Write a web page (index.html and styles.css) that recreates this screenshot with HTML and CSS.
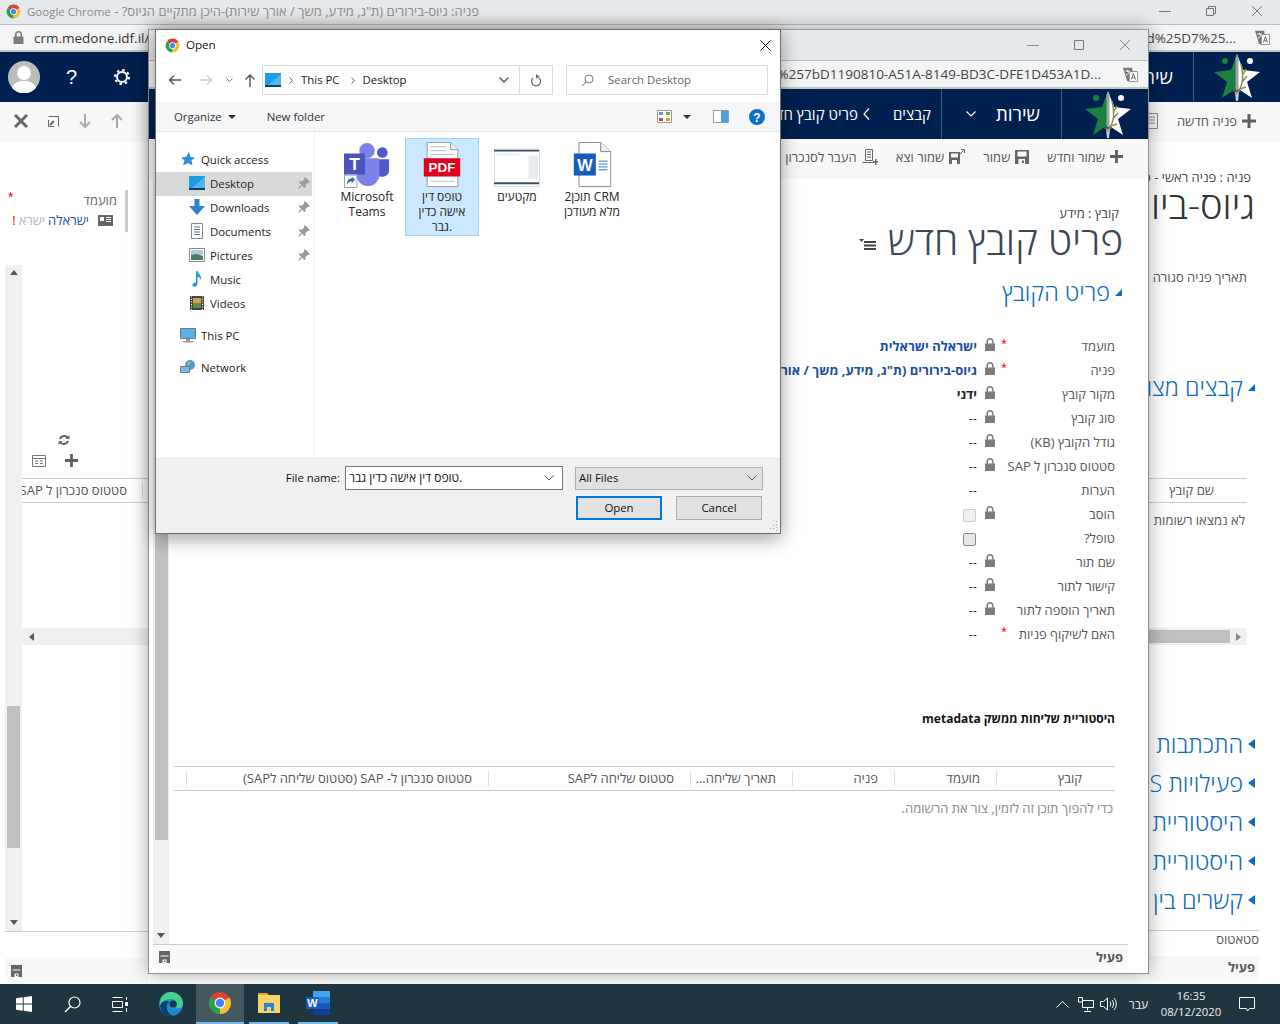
FILE: index.html
```html
<!DOCTYPE html>
<html>
<head>
<meta http-equiv="Content-Type" content="text/html; charset=utf-8">
<title>Open</title>
<link rel="stylesheet" href="styles.css">
</head>

<body>

<svg class="defs" width="0" height="0">
  <symbol id="i-chrome" viewBox="0 0 24 24">
    <path fill="#db4437" d="M12 12 2.47 6.5A11 11 0 0 1 21.53 6.5Z"/>
    <path fill="#fbc02d" d="M12 12 21.53 6.5A11 11 0 0 1 12 23Z"/>
    <path fill="#2e9e4f" d="M12 12 12 23A11 11 0 0 1 2.47 6.5Z"/>
    <circle cx="12" cy="12" r="5.4" fill="#fff"/><circle cx="12" cy="12" r="4.2" fill="#4285f4"/>
  </symbol>
  <symbol id="i-logo" viewBox="0 0 48 50">
    <path fill="#1b7f3e" d="M24 2 18 18 1 20 14 30 9 46 24 36Z"/>
    <path fill="#fff" d="M24 2 30 18 47 20 34 30 39 46 24 36Z"/>
    <circle cx="12" cy="9" r="3" fill="#1b7f3e"/><circle cx="37" cy="9" r="3" fill="#fff"/>
    <path fill="#9aa3a8" d="M22.5 6 24 2 25.500 6V38H22.500Z"/>
    <path fill="#555" d="M20 38H28V40H20Z"/><path fill="#c9ced1" d="M22 40H26L25 49H23Z"/>
    <path fill="none" stroke="#8d8f4d" stroke-width="1.500" d="M23 42C31 34 31 24 28 12M29 30 34 24M30 22 33 17M27 37 33 35"/>
  </symbol>
  <symbol id="i-lock" viewBox="0 0 10 13">
    <path fill="#7c7c7c" d="M0 5.500H1.500V3.500a3.500 3.500 0 0 1 7 0V5.500H10V13H0ZM3 5.500H7V3.500a2 2 0 0 0-4 0Z"/>
  </symbol>
  <symbol id="i-plus" viewBox="0 0 14 14"><path fill="#5f5f5f" d="M5.500 0H8.500V5.500H14V8.500H8.500V14H5.500V8.500H0V5.500H5.500Z"/></symbol>
  <symbol id="i-save" viewBox="0 0 14 14">
    <path fill="#666" fill-rule="evenodd" d="M0 0H14V14H0ZM2.500 1.500V6.500H11.500V1.500ZM3.500 9V14H10V9Z"/>
    <path fill="#666" d="M7 10.500H9V13H7Z"/>
  </symbol>
  <symbol id="i-disk" viewBox="0 0 11 12">
    <path fill="#666" fill-rule="evenodd" d="M0 0H11V12H0ZM1.500 4.500V5.500H9.500V4.500ZM3.500 8.500V12H7.500V8.500Z"/>
    <path fill="#666" d="M5 9.500H6.500V11H5Z"/>
  </symbol>
  <symbol id="i-pin" viewBox="0 0 12 12"><path fill="#9a9a9a" d="M7 0 12 5 10.800 6 10 5.500 7.500 8 7.500 10.500 6.500 11 1 5.500 1.500 4.500 4 4.500 6.500 2 6 1.200ZM3 8 4 9 .8 11.800 0 11Z"/></symbol>
  <symbol id="i-translate" viewBox="0 0 18 18">
    <path fill="#777" d="M0 1H11L13 17H5Z"/><path fill="#fff" stroke="#777" d="M7.500 5.500H17.500V17.500H7.500Z"/>
    <path fill="none" stroke="#fff" stroke-width="1.200" d="M3 5H8M5.500 3.500V5M3.500 10C6 9 7 7 7.500 5"/>
    <path fill="none" stroke="#666" stroke-width="1.200" d="M10 15 12.500 8 15 15M11 13H14"/>
  </symbol>
  <symbol id="i-desktop" viewBox="0 0 16 14"><path fill="#1b9de2" d="M0 0H16V13H0Z"/><path fill="#fff" opacity=".25" d="M16 1 3 12H16Z"/><path fill="#0c3f73" d="M0 12H16V14H0Z"/></symbol>
</svg>

<!-- window behind -->
<section class="win win--back">
  <div class="titlebar titlebar--short">
    <svg class="titlebar__ico"><use href="#i-chrome"/></svg>
    <p class="titlebar__text" dir="rtl">פניה: גיוס-בירורים (ת"ג, מידע, משך / אורך שירות)-היכן מתקיים הגיוס? - <span class="titlebar__app">Google Chrome</span></p>
    <div class="winctl">
      <svg width="12" height="12"><path stroke="#777" d="M0 6.500H12"/></svg>
      <svg width="12" height="12"><path fill="none" stroke="#777" d="M1.500 3.500H8.500V10.500H1.500ZM3.500 3.500V1.500H10.500V8.500H8.500"/></svg>
      <svg width="12" height="12"><path stroke="#777" d="M1 1 11 11M11 1 1 11"/></svg>
    </div>
  </div>
  <div class="urlbar urlbar--back">
    <svg class="urlbar__lock"><use href="#i-lock"/></svg>
    <span class="urlbar__text">crm.medone.idf.il/</span>
    <span class="urlbar__tail">d%25D7%25...</span>
    <svg class="urlbar__tr"><use href="#i-translate"/></svg>
  </div>
  <div class="topnav topnav--back">
    <div class="topnav__user">
      <svg class="avatar" viewBox="0 0 32 32"><circle cx="16" cy="16" r="16" fill="#bdbdbd"/><circle cx="16" cy="12" r="7" fill="#fff"/><path fill="#fff" d="M4 27C6 21 11 20 16 20S26 21 28 27A16 16 0 0 1 4 27Z"/></svg>
      <span class="topnav__help">?</span>
      <svg class="topnav__gear" viewBox="0 0 16 16"><circle cx="8" cy="8" r="5" fill="none" stroke="#fff" stroke-width="2"/><circle cx="8" cy="8" r="7" fill="none" stroke="#fff" stroke-width="2" stroke-dasharray="2.500 3"/></svg>
    </div>
    <div class="topnav__brand">
      <span class="topnav__svc">שירות</span>
      <span class="topnav__logo"><svg width="48" height="50"><use href="#i-logo"/></svg></span>
    </div>
  </div>
  <div class="cmdbar cmdbar--back">
    <div class="cmdbar__left">
      <svg width="14" height="14"><path stroke="#666" stroke-width="3" d="M1 1 13 13M13 1 1 13"/></svg>
      <svg width="14" height="14"><path fill="none" stroke="#666" d="M2.500 2.500H12.500V12.500M2.500 6V12.500H8"/><path stroke="#666" stroke-width="2" d="M4 11 8 7"/></svg>
      <svg width="14" height="14"><path fill="none" stroke="#aaa" stroke-width="2" d="M7 0V13M2 8 7 13 12 8"/></svg>
      <svg width="14" height="14"><path fill="none" stroke="#aaa" stroke-width="2" d="M7 14V1M2 6 7 1 12 6"/></svg>
    </div>
    <div class="cmd cmd--back">
      <svg width="14" height="14"><use href="#i-plus"/></svg><span>פניה חדשה</span>
      <svg class="cmd__doc" width="14" height="16"><path fill="none" stroke="#888" d="M1.500 .5H12.500V15.500H1.500ZM4 4H10M4 7H10M4 10H10"/></svg>
    </div>
  </div>
  <div class="back__body">
    <div class="back__left">
      <div class="lookup">
        <div class="lookup__head"><b class="req">*</b><span>מועמד</span></div>
        <div class="lookup__val" dir="rtl"><svg width="15" height="11" viewBox="0 0 15 11"><path fill="#666" d="M0 0H15V11H0Z"/><path fill="#fff" d="M2 2H6V6H2ZM8 2H13V3H8ZM8 4H13V5H8ZM8 6H13V7H8Z"/></svg><span class="lookup__link">ישראלה</span><span class="lookup__fade">ישרא</span><b class="lookup__mark">!</b></div>
      </div>
      <div class="pane">
        <div class="vscroll">
          <span class="vscroll__up"></span>
          <span class="vscroll__gap vscroll__gap--a"></span>
          <span class="vscroll__thumb"></span>
          <span class="vscroll__gap"></span>
          <span class="vscroll__down"></span>
        </div>
        <div class="pane__main">
          <div class="pane__tools">
            <svg class="pane__sync" width="12" height="12" viewBox="0 0 12 12"><path fill="none" stroke="#666" stroke-width="2" d="M10 4A4.500 4.500 0 0 0 2 5M2 8A4.500 4.500 0 0 0 10 7"/><path fill="#666" d="M11.500 1V5H7.500ZM.5 11V7H4.500Z"/></svg>
            <div class="pane__toolrow">
              <svg width="14" height="12" viewBox="0 0 14 12"><path fill="none" stroke="#777" d="M.5 .5H13.500V11.500H.5ZM.5 3.500H13.500M3 6H6M8 6H11M3 8.500H6M8 8.500H11"/></svg>
              <svg width="13" height="13"><use href="#i-plus"/></svg>
            </div>
          </div>
          <div class="pane__head" dir="rtl"><span>סטטוס סנכרון ל SAP</span></div>
          <div class="hscroll"><span class="hscroll__left"></span></div>
        </div>
      </div>
      <div class="back__status"><svg width="11" height="12"><use href="#i-disk"/></svg></div>
    </div>
    <div class="back__right" dir="rtl">
      <p class="crumb">פניה : פניה ראשי - ס</p>
      <h2 class="bighead">גיוס-ביו</h2>
      <p class="closedate">תאריך פניה סגורה</p>
      <h3 class="sect sect--files">קבצים מצו</h3>
      <div class="filetable">
        <div class="filetable__head">שם קובץ</div>
        <p class="filetable__none">לא נמצאו רשומות</p>
      </div>
      <div class="hscroll hscroll--right"><span class="hscroll__right"></span><span class="hscroll__thumb"></span></div>
      <div class="sections">
        <h3 class="sect">התכתבות</h3>
        <h3 class="sect">פעילויות S</h3>
        <h3 class="sect">היסטוריית</h3>
        <h3 class="sect">היסטוריית</h3>
        <h3 class="sect">קשרים בין</h3>
      </div>
      <p class="statuslabel">סטאטוס</p>
      <div class="back__rstatus">פעיל</div>
    </div>
  </div>
</section>

<!-- middle window -->
<section class="win win--mid">
  <div class="titlebar titlebar--mid">
    <div class="winctl winctl--mid">
      <svg width="12" height="12"><path stroke="#888" d="M0 6.500H12"/></svg>
      <svg width="12" height="12"><path fill="none" stroke="#777" d="M1.500 1.500H10.500V10.500H1.500Z"/></svg>
      <svg width="12" height="12"><path stroke="#888" d="M1 1 11 11M11 1 1 11"/></svg>
    </div>
  </div>
  <div class="urlbar urlbar--mid">
    <span class="urlbar__tail">%257bD1190810-A51A-8149-BD3C-DFE1D453A1D...</span>
    <svg class="urlbar__tr"><use href="#i-translate"/></svg>
  </div>
  <div class="topnav topnav--mid" dir="rtl">
    <span class="topnav__logo topnav__logo--mid"><svg width="48" height="50"><use href="#i-logo"/></svg></span>
    <div class="topnav__menu"><span class="topnav__svc">שירות</span><svg width="10" height="6"><path fill="none" stroke="#fff" stroke-width="1.200" d="M.5 .5 5 5 9.500 .5"/></svg></div>
    <div class="topnav__trail">
      <span>קבצים</span>
      <svg width="7" height="12"><path fill="none" stroke="#fff" stroke-width="1.200" d="M6 .5 1 6 6 11.500"/></svg>
      <span class="topnav__current">פריט קובץ חדש</span>
    </div>
  </div>
  <div class="cmdbar cmdbar--mid" dir="rtl">
    <div class="cmd"><svg width="13" height="13"><use href="#i-plus"/></svg><span>שמור וחדש</span></div>
    <div class="cmd"><svg width="14" height="14"><use href="#i-save"/></svg><span>שמור</span></div>
    <div class="cmd"><svg width="16" height="15" viewBox="0 0 16 15"><path fill="#666" fill-rule="evenodd" d="M0 3H11V15H0ZM2 4.500V8.500H9V4.500ZM3 11V15H8V11Z"/><path fill="none" stroke="#666" d="M12 .5H15.500V4M11 5 15 1"/></svg><span>שמור וצא</span></div>
    <div class="cmd"><svg width="16" height="16" viewBox="0 0 16 16"><path fill="none" stroke="#666" d="M3.500 .5H10.500V11.500H3.500ZM5 3H9M5 5.500H9M5 8H9M.5 13.500H12"/><path fill="#666" d="M13 10H14.500V12H16V13.500H14.500V16H13V13.500H11V12H13Z"/></svg><span>העבר לסנכרון</span></div>
  </div>
  <div class="mid__body">
    <div class="vscroll vscroll--mid">
      <span class="vscroll__thumb vscroll__thumb--mid"></span>
      <span class="vscroll__gap"></span>
      <span class="vscroll__down"></span>
    </div>
    <div class="form" dir="rtl">
      <p class="form__crumb">קובץ : מידע</p>
      <h1 class="form__title">פריט קובץ חדש <svg class="form__menu" width="17" height="12"><path fill="#444" d="M5 3H17V5H5ZM5 6.500H17V8.500H5ZM5 10H17V12H5ZM0 1H5L2.500 4Z"/></svg></h1>
      <h3 class="sect sect--form">פריט הקובץ</h3>
      <div class="form__rows">
        <div class="row"><label>מועמד</label><b class="req">*</b><svg class="lock"><use href="#i-lock"/></svg><span class="row__val row__link">ישראלה ישראלית</span></div>
        <div class="row"><label>פניה</label><b class="req">*</b><svg class="lock"><use href="#i-lock"/></svg><span class="row__val row__link row__long">גיוס-בירורים (ת"ג, מידע, משך / אורך</span></div>
        <div class="row"><label>מקור קובץ</label><i></i><svg class="lock"><use href="#i-lock"/></svg><span class="row__val row__bold">ידני</span></div>
        <div class="row"><label>סוג קובץ</label><i></i><svg class="lock"><use href="#i-lock"/></svg><span class="row__val">--</span></div>
        <div class="row"><label>גודל הקובץ (KB)</label><i></i><svg class="lock"><use href="#i-lock"/></svg><span class="row__val">--</span></div>
        <div class="row"><label>סטטוס סנכרון ל SAP</label><i></i><svg class="lock"><use href="#i-lock"/></svg><span class="row__val">--</span></div>
        <div class="row"><label>הערות</label><i></i><i></i><span class="row__val">--</span></div>
        <div class="row"><label>הוסב</label><i></i><svg class="lock"><use href="#i-lock"/></svg><span class="row__val"><span class="check check--off"></span></span></div>
        <div class="row"><label>טופל?</label><i></i><i></i><span class="row__val"><span class="check"></span></span></div>
        <div class="row"><label>שם תור</label><i></i><svg class="lock"><use href="#i-lock"/></svg><span class="row__val">--</span></div>
        <div class="row"><label>קישור לתור</label><i></i><svg class="lock"><use href="#i-lock"/></svg><span class="row__val">--</span></div>
        <div class="row"><label>תאריך הוספה לתור</label><i></i><svg class="lock"><use href="#i-lock"/></svg><span class="row__val">--</span></div>
        <div class="row"><label>האם לשיקוף פניות</label><b class="req">*</b><i></i><span class="row__val">--</span></div>
      </div>
      <h4 class="form__h4">היסטוריית שליחות ממשק metadata</h4>
      <div class="grid__head">
        <span>קובץ</span><span>מועמד</span><span>פניה</span><span>תאריך שליחה...</span><span>סטטוס שליחה לSAP</span><span>סטטוס סנכרון ל- SAP (סטטוס שליחה לSAP)</span><span></span>
      </div>
      <p class="grid__msg">כדי להפוך תוכן זה לזמין, צור את הרשומה.</p>
    </div>
  </div>
  <div class="mid__status"><svg width="11" height="12"><use href="#i-disk"/></svg><b>פעיל</b></div>
</section>

<!-- open file dialog -->
<section class="win dlg">
  <div class="dlg__title">
    <svg width="15" height="15"><use href="#i-chrome"/></svg>
    <span class="dlg__txt">Open</span>
    <svg class="dlg__close" width="11" height="11"><path stroke="#111" d="M.5 .5 10.500 10.500M10.500 .5 .5 10.500"/></svg>
  </div>
  <div class="dlg__addr">
    <svg width="14" height="12"><path fill="none" stroke="#555" stroke-width="1.400" d="M13 6H1.500M6 1.500 1.500 6 6 10.500"/></svg>
    <svg width="14" height="12"><path fill="none" stroke="#ccc" stroke-width="1.400" d="M1 6H12.500M8 1.500 12.500 6 8 10.500"/></svg>
    <svg width="7" height="5"><path fill="none" stroke="#777" d="M.5 .5 3.500 3.500 6.500 .5"/></svg>
    <svg width="12" height="14"><path fill="none" stroke="#555" stroke-width="1.400" d="M6 14V2M1.500 6.500 6 2 10.500 6.500"/></svg>
    <div class="dlg__path">
      <svg width="16" height="14"><use href="#i-desktop"/></svg>
      <svg class="chev" width="4" height="7"><path fill="none" stroke="#666" d="M.5 .5 3.500 3.500 .5 6.500"/></svg>
      <span class="dlg__txt dlg__crumb">This PC</span>
      <svg class="chev" width="4" height="7"><path fill="none" stroke="#666" d="M.5 .5 3.500 3.500 .5 6.500"/></svg>
      <span class="dlg__txt dlg__crumb">Desktop</span>
      <svg class="dlg__pathdown" width="10" height="6"><path fill="none" stroke="#555" stroke-width="1.400" d="M.5 .5 5 5 9.500 .5"/></svg>
      <span class="dlg__refresh"><svg width="11" height="13" viewBox="0 0 11 13"><path fill="none" stroke="#666" stroke-width="1.200" d="M7.500 3.500A4.500 4.500 0 1 1 2 4"/><path fill="#666" d="M5 0V4.500L8.500 2.500Z"/></svg></span>
    </div>
    <div class="dlg__search">
      <svg width="13" height="13"><circle cx="8" cy="5" r="4" fill="none" stroke="#777"/><path stroke="#777" d="M5 8 .8 12.200"/></svg>
      <span class="dlg__txt">Search Desktop</span>
    </div>
  </div>
  <div class="dlg__tools">
    <span class="dlg__org">Organize</span><span class="caret"></span>
    <span class="dlg__newf">New folder</span>
    <div class="dlg__views">
      <svg width="15" height="13" viewBox="0 0 15 13"><path fill="#fff" stroke="#999" d="M.5 .5H14.500V12.500H.5Z"/><path fill="#5b9bd5" d="M2 2H6V5H2Z"/><path fill="#70ad47" d="M9 2H13V5H9Z"/><path fill="#c0504d" d="M2 8H6V11H2Z"/><path fill="#e0a030" d="M9 8H13V11H9Z"/></svg>
      <span class="caret"></span>
      <svg class="dlg__pane" width="16" height="13" viewBox="0 0 16 13"><path fill="#fff" stroke="#999" d="M.5 .5H15.500V12.500H.5Z"/><path fill="#4fa0e0" d="M8 1H15V12H8Z"/></svg>
      <svg class="dlg__help" width="16" height="16" viewBox="0 0 16 16"><circle cx="8" cy="8" r="8" fill="#0f6fc6"/><text x="8" y="12.500" font-family="Liberation Sans" font-size="12" font-weight="700" fill="#fff" text-anchor="middle">?</text></svg>
    </div>
  </div>
  <div class="dlg__main">
    <nav class="tree">
      <a class="tree__i tree__i--top tree__i--root"><svg width="14" height="14" viewBox="0 0 14 14"><path fill="#2f8fdc" d="M8 0 9.500 5 14 5.500 10.500 8.500 11.500 13.500 7 11 2 13.500 3.500 8.500 0 5.500 5 5Z"/></svg>Quick access</a>
      <a class="tree__i tree__i--sel"><svg width="16" height="14"><use href="#i-desktop"/></svg>Desktop<svg class="tree__pin" width="12" height="12"><use href="#i-pin"/></svg></a>
      <a class="tree__i"><svg width="16" height="16" viewBox="0 0 16 16"><path fill="#2f80d0" d="M5.500 0H10.500V7H16L8 16 0 7H5.500Z"/></svg>Downloads<svg class="tree__pin" width="12" height="12"><use href="#i-pin"/></svg></a>
      <a class="tree__i"><svg width="16" height="16" viewBox="0 0 16 16"><path fill="#fff" stroke="#888" d="M2.500 .5H13.500V15.500H2.500Z"/><path stroke="#4a7ab0" d="M5 4H11M5 6.500H11M5 9H11M5 11.500H11"/></svg>Documents<svg class="tree__pin" width="12" height="12"><use href="#i-pin"/></svg></a>
      <a class="tree__i"><svg width="16" height="14" viewBox="0 0 16 14"><path fill="#fff" stroke="#888" d="M.5 .5H15.500V13.500H.5Z"/><path fill="#a9cbe6" d="M2 2H14V7H2Z"/><path fill="#4d7a5a" d="M2 7 8 6 14 8V12H2Z"/></svg>Pictures<svg class="tree__pin" width="12" height="12"><use href="#i-pin"/></svg></a>
      <a class="tree__i"><svg width="16" height="16" viewBox="0 0 16 16"><path fill="#1f9ae0" d="M7 0H8.500C9 3 13 4 12 9 11 6.500 9.500 6 8.500 6V13C8.500 15 6 16 4.500 15.500S3 13 5 12C5.800 11.600 6.500 11.500 7 11.600Z"/></svg>Music</a>
      <a class="tree__i"><svg width="16" height="16" viewBox="0 0 16 16"><path fill="#444" d="M1 1H15V15H1Z"/><path fill="#d8a04a" d="M4 3H12V8H4Z"/><path fill="#5a8f4a" d="M4 8H12V13H4Z"/><path stroke="#fff" stroke-dasharray="1 1.500" d="M2.500 1.500V15M13.500 1.500V15"/></svg>Videos</a>
      <a class="tree__i tree__i--root tree__i--gap"><svg width="16" height="15" viewBox="0 0 16 15"><path fill="#5ab0ea" stroke="#777" d="M.5 .5H15.500V10.500H.5Z"/><path fill="#999" d="M6 11H10V13H13V14.500H3V13H6Z"/></svg>This PC</a>
      <a class="tree__i tree__i--root tree__i--gap"><svg width="16" height="15" viewBox="0 0 16 15"><circle cx="10" cy="5" r="5" fill="#4d9ad8"/><path fill="#7cc07c" d="M8 1 11 2 10 5 7 5Z"/><path fill="#7cb9ea" stroke="#777" d="M.5 6.500H9.500V12.500H.5Z"/></svg>Network</a>
    </nav>
    <div class="files">
      <div class="tile">
        <svg class="tile__ico" viewBox="0 0 48 48">
          <circle cx="24" cy="9" r="8" fill="#7b83eb"/><circle cx="40" cy="11" r="5.500" fill="#5059c9"/>
          <path fill="#5059c9" d="M32 18H47V31A8 8 0 0 1 32 31Z"/>
          <path fill="#7b83eb" d="M13 17H37V34A12 12 0 0 1 13 34Z"/>
          <path fill="#4b53bc" d="M0 12H22V34H0Z"/>
          <text x="11" y="29" font-family="Liberation Sans" font-size="18" font-weight="700" fill="#fff" text-anchor="middle">T</text>
          <path fill="#fff" stroke="#999" d="M.5 34.500H13.500V47.500H.5Z"/><path fill="#2a6fb5" d="M3 45C3 40 5 38 8 38V36L11.500 39.500 8 43V41C6 41 4.500 42 3 45Z"/>
        </svg>
        <span>Microsoft<br>Teams</span>
      </div>
      <div class="tile tile--sel">
        <svg class="tile__ico" viewBox="0 0 48 48">
          <path fill="#fff" stroke="#999" d="M8.500 .5H33L40.500 8V46.500H8.500Z"/><path fill="#eee" stroke="#999" d="M33 .5V8H40.500"/>
          <path stroke="#bbb" d="M12 5H29M12 9H29M12 13H37M12 41H37"/>
          <path fill="#e0001b" d="M5 17H43V36H5Z"/>
          <text x="24" y="31.500" font-family="Liberation Sans" font-size="14" font-weight="700" fill="#fff" text-anchor="middle">PDF</text>
        </svg>
        <span>טופס דין<br>אישה כדין<br>גבר.</span>
      </div>
      <div class="tile">
        <svg class="tile__ico" viewBox="0 0 48 48">
          <path fill="#fff" stroke="#ddd" d="M.5 7.500H47.500V46.500H.5Z"/>
          <path fill="#3b5068" d="M0 8H47V10H0ZM0 42H47V44H0Z"/><path fill="#e7ebef" d="M36 14H46V38H36ZM3 12H26V14H3Z"/>
        </svg>
        <span>מקטעים</span>
      </div>
      <div class="tile">
        <svg class="tile__ico" viewBox="0 0 48 48">
          <path fill="#fff" stroke="#888" d="M10.500 .5H33L43.500 10V46.500H10.500Z"/><path fill="#f0f0f0" stroke="#888" d="M33 .5V10H43.500"/>
          <path stroke="#2b6cc4" d="M31 20H40M31 23H40M31 26H40M31 29H40"/>
          <path fill="#185abd" d="M5 12H28V35H5Z"/>
          <text x="16.500" y="30" font-family="Liberation Sans" font-size="17" font-weight="700" fill="#fff" text-anchor="middle">W</text>
        </svg>
        <span>תוכן2 CRM<br>מלא מעודכן</span>
      </div>
    </div>
  </div>
  <div class="dlg__foot">
    <div class="dlg__line">
      <label class="dlg__txt">File name:</label>
      <div class="fname"><span class="dlg__txt">טופס דין אישה כדין גבר.</span><svg width="10" height="6"><path fill="none" stroke="#555" d="M.5 .5 5 5 9.500 .5"/></svg></div>
      <div class="ftype"><span class="dlg__txt">All Files</span><svg width="10" height="6"><path fill="none" stroke="#555" d="M.5 .5 5 5 9.500 .5"/></svg></div>
    </div>
    <div class="dlg__btns">
      <button class="btn btn--main">Open</button>
      <button class="btn">Cancel</button>
    </div>
    <svg class="dlg__grip" width="10" height="10"><path stroke="#aaa" stroke-dasharray="1 2" d="M8.500 0V10M5.500 4V10M2.500 7V10"/></svg>
  </div>
</section>

<!-- taskbar -->
<footer class="taskbar">
  <div class="taskbar__left">
    <span class="tb"><svg width="16" height="16" viewBox="0 0 16 16"><path fill="#fff" d="M0 2.300 6.800 1.300V7.500H0ZM7.700 1.200 16 0V7.500H7.700ZM0 8.400H6.800V14.700L0 13.700ZM7.700 8.400H16V16L7.700 14.800Z"/></svg></span>
    <span class="tb"><svg width="17" height="17" viewBox="0 0 17 17"><circle cx="10.500" cy="6.500" r="5.500" fill="none" stroke="#fff" stroke-width="1.200"/><path stroke="#fff" stroke-width="1.400" d="M6.500 10.500 1 16"/></svg></span>
    <span class="tb"><svg width="17" height="15" viewBox="0 0 17 15"><path fill="none" stroke="#fff" d="M.5 .5H10.500M.5 14.500H10.500M.5 4.500H10.500V10.500H.5ZM14.500 0V3M14.500 11V15"/><path fill="#fff" d="M13 5H16V9H13Z"/></svg></span>
    <span class="tb tb--edge"><svg width="24" height="24" viewBox="0 0 24 24"><circle cx="12" cy="12" r="12" fill="#1e88c9"/><path fill="#48d08a" d="M12 0A12 12 0 0 1 24 12C24 16 20 17 17 16 20 12 17 7 12 7 7 7 3 10 1 14 0 6 5 0 12 0Z"/><path fill="#0b3f7a" d="M1 14C3 8 8 8 10 10 6 13 7 21 14 24 7 25 2 20 1 14Z"/><circle cx="14" cy="12" r="3.500" fill="#1f3540"/></svg></span>
    <span class="tb tb--on"><svg width="24" height="24"><use href="#i-chrome"/></svg></span>
    <span class="tb tb--run"><svg width="24" height="24" viewBox="0 0 24 24"><path fill="#e8a92a" d="M1 2H10L12 4H1Z"/><path fill="#fad366" d="M1 4H23V22H1Z"/><path fill="#1f88d8" d="M7 12H17V20H14V16H10V20H7Z"/></svg></span>
    <span class="tb tb--run"><svg width="25" height="24" viewBox="0 0 25 24"><path fill="#41a5ee" d="M7 0H24V6H7Z"/><path fill="#2b7cd3" d="M7 6H24V12H7Z"/><path fill="#185abd" d="M7 12H24V18H7Z"/><path fill="#103f91" d="M7 18H24V24H7Z"/><path fill="#185abd" d="M0 6H13V18H0Z"/><text x="6.500" y="16" font-family="Liberation Sans" font-size="11" font-weight="700" fill="#fff" text-anchor="middle">W</text></svg></span>
  </div>
  <div class="taskbar__tray">
    <svg width="13" height="7"><path fill="none" stroke="#fff" d="M.5 6.500 6.500 .5 12.500 6.500"/></svg>
    <svg width="16" height="15" viewBox="0 0 16 15"><path fill="none" stroke="#fff" d="M4.500 3.500H15.500V10.500H4.500ZM9.500 10.500V13.500M6 14.500H13"/><path fill="#1f3540" stroke="#fff" d="M.5 .5H4.500V5H.5Z"/></svg>
    <svg width="17" height="14" viewBox="0 0 17 14"><path fill="none" stroke="#fff" d="M.5 4.500H3.500L7.500 1V13L3.500 9.500H.5ZM10 4.500C11 6 11 8 10 9.500M12 3C14 5 14 9 12 11M14 1C17 4 17 10 14 13"/></svg>
    <span class="tray__lang">עבר</span>
    <div class="tray__clock"><span>16:35</span><span>08/12/2020</span></div>
    <svg class="tray__note" width="16" height="15" viewBox="0 0 16 15"><path fill="none" stroke="#fff" d="M.5 .5H15.500V11.500H10.500L8.500 14 7.500 11.500H.5Z"/></svg>
  </div>
</footer>

</body>

</html>
```

FILE: styles.css
```css
/* reset */
html,body,div,p,h1,h2,h3,h4,ul,li,nav,section,footer{margin:0;padding:0}
h1,h2,h3,h4{font-weight:400;font-size:100%}
i{display:block}

/* page */
html,body{width:1280px;height:1024px;overflow:hidden}
body{position:relative;background:#fff;font-family:"Open Sans","Liberation Sans",sans-serif;font-size:12px;color:#444}
.defs{position:absolute}
.win{position:absolute;background:#fff;box-sizing:border-box}
.win--back{left:0;top:0;width:1280px;height:984px}
.win--mid{left:148px;top:29px;width:1001px;height:945px;border:1px solid #8f8f8f;border-top-color:#a0a0a0;box-shadow:0 0 18px rgba(0,0,0,.35)}
.dlg{left:155px;top:29px;width:626px;height:505px;border:1px solid #6f6f6f;box-shadow:0 4px 18px rgba(0,0,0,.4);display:flex;flex-direction:column;font-size:11.4px;color:#222}

/* title + url bars */
.titlebar{background:#e6e9ec;display:flex;align-items:center;border-bottom:1px solid #bcbcbc;box-sizing:border-box}
.titlebar--short{height:25px;padding-left:6px;padding-bottom:2px}
.titlebar--mid{height:31px;justify-content:flex-end}
.titlebar__ico{width:15px;height:15px;flex:none;margin-right:6px}
.titlebar__text{font-size:13px;color:#8a8a8a;white-space:nowrap;text-align:left}
.titlebar__app{font-size:11.500px}
.winctl{margin-left:auto;display:flex;gap:34px;padding-right:17px}
.winctl--mid{padding-right:17px;gap:34px}
.urlbar{background:#f3f4f5;display:flex;align-items:center;box-sizing:border-box;border-bottom:2px solid #c4c4c4;font-size:13.500px;color:#333}
.urlbar--back{height:27px;padding-left:13px;padding-right:10px}
.urlbar--mid{height:28px;justify-content:flex-end;padding-right:10px}
.urlbar--back .urlbar__tr{margin-left:19px}
.urlbar__lock{width:11px;height:13px;margin-right:10px;flex:none}
.urlbar__tail{margin-left:auto;white-space:nowrap;color:#444}
.urlbar__tr{width:15px;height:15px;margin-left:22px;flex:none}

/* top nav */
.topnav{background:#002050;height:50px;display:flex;color:#fff;align-items:stretch}
.topnav--back{justify-content:space-between}
.topnav__user{display:flex;align-items:center;padding-left:8px}
.avatar{width:32px;height:32px}
.topnav__help{font-family:"Liberation Sans",sans-serif;font-size:20px;margin-left:26px;width:12px}
.topnav__gear{width:16px;height:16px;margin-left:36px}
.topnav__brand{display:flex;align-items:center}
.topnav__svc{font-size:19px;white-space:nowrap;direction:rtl}
.topnav__logo{display:flex;align-items:center;justify-content:center;width:87px;box-sizing:border-box;margin-left:20px;border-left:1px solid #47597a}
.topnav--mid{justify-content:flex-start}
.topnav__logo--mid{margin:0;padding:0 0 0 6px;border-left:1px solid #47597a}
.topnav__menu{display:flex;align-items:center;gap:20px;width:120px;box-sizing:border-box;padding-right:21px;border-left:1px solid #47597a}
.topnav__trail{display:flex;align-items:center;gap:10px;padding-right:10px;font-size:15px;white-space:nowrap}
.topnav__trail svg{margin:0 13px 0 -5px}
.topnav__current{font-size:15px}

/* command bars */
.cmdbar{background:#f8f8f8;height:40px;display:flex;align-items:center;box-sizing:border-box;padding-bottom:3px}
.cmdbar__left{display:flex;gap:18px;padding-left:14px;align-items:center}
.cmd{display:flex;align-items:center;gap:5px;font-size:13px;color:#555;white-space:nowrap}
.cmd--back{direction:rtl;margin-left:auto;padding-right:24px}
.cmd__doc{margin-right:13px}
.cmdbar--mid{gap:18px;padding-right:25px;padding-bottom:5px}

/* back window body */
.back__body{display:flex;justify-content:space-between;height:842px}
.back__left{width:148px;display:flex;flex-direction:column}
.lookup{margin:48px 20px 0 8px;height:42px;border-right:3px solid #ccc;padding-right:8px;white-space:nowrap;overflow:hidden;direction:ltr}
.lookup__head{display:flex;justify-content:space-between;font-size:13px;color:#666;line-height:20px}
.req{color:#f00;font-weight:400;font-size:14px;line-height:14px;font-family:"Liberation Sans",sans-serif}
.lookup__val{display:flex;gap:3px;align-items:center;height:20px;font-size:13px;padding-right:4px}
.lookup__val svg{flex:none;margin-left:6px}
.lookup__link{color:#1c4e9d}
.lookup__fade{color:#aab6cc}
.lookup__mark{color:#f00;font-weight:400}
.pane{display:flex;margin:33px 0 0 5px;height:666px;border-bottom:1px solid #ccc}
.vscroll{width:17px;background:#f0f0f0;display:flex;flex-direction:column;align-items:center;flex:none}
.vscroll__up{width:0;height:0;margin-top:5px;border:4px solid transparent;border-top:0;border-bottom:5px solid #555}
.vscroll__down{width:0;height:0;margin-bottom:6px;border:4px solid transparent;border-bottom:0;border-top:5px solid #555}
.vscroll__gap{flex:1}
.vscroll__gap--a{flex:none;height:431px}
.vscroll__thumb{width:13px;height:142px;background:#c0c0c0}
.pane__main{flex:1;min-width:0;overflow:hidden}
.pane__tools{height:213px;box-sizing:border-box;padding:169px 0 0 10px}
.pane__sync{display:block;margin-left:26px}
.pane__toolrow{display:flex;align-items:center;gap:19px;margin-top:8px}
.pane__head{border-top:1px solid #ccc;border-bottom:1px solid #ccc;height:25px;box-sizing:border-box;line-height:23px;width:126px;white-space:nowrap;color:#555;font-size:13px;overflow:hidden;display:flex;justify-content:flex-start;padding-right:21px;position:relative}
.pane__head:after{content:"";position:absolute;left:120px;top:4px;height:16px;border-left:1px solid #ddd}
.hscroll{height:17px;background:#f0f0f0;margin-top:125px;display:flex;align-items:center}
.hscroll__left{margin-left:7px;width:0;height:0;border:4px solid transparent;border-left:0;border-right:5px solid #555}
.back__status{margin:26px 0 0 5px;height:25px;background:#f8f8f8;display:flex;align-items:center;padding-left:6px}

/* back window, right strip */
.back__right{width:132px;padding-right:21px;box-sizing:border-box;white-space:nowrap;overflow:hidden}
.crumb{font-size:13px;color:#444;line-height:16px;margin-top:27px;padding-right:8px}
.bighead{font-size:38px;font-weight:300;color:#333;line-height:38px;padding-right:4px}
.closedate{font-size:13px;color:#555;line-height:16px;margin-top:46px;padding-right:12px}
.sect{font-size:23.500px;line-height:30px;font-weight:300;color:#0f6cbd;position:relative;padding-right:16px;white-space:nowrap}
.sect:before{content:"";position:absolute;right:4px;top:12px;border-style:solid;border-width:0 0 7px 7px;border-color:transparent transparent #0f6cbd transparent}
.sect--files{margin-top:87px}
.filetable{margin:76px 12px 0 0;height:150px}
.filetable__head{border-top:1px solid #ccc;border-bottom:1px solid #ccc;height:25px;box-sizing:border-box;line-height:23px;padding-right:33px;color:#555;font-size:13px}
.filetable__none{font-size:13px;line-height:16px;margin-top:9px;color:#555;padding-right:2px}
.hscroll--right{margin:0 12px 0 0;flex-direction:row}
.hscroll__right{margin-right:6px;width:0;height:0;border:4px solid transparent;border-right:0;border-left:5px solid #888}
.hscroll__thumb{flex:1;height:13px;background:#c0c0c0;margin-right:6px}
.sections{margin-top:84px;display:flex;flex-direction:column;gap:9px}
.sections .sect:before{right:4px;top:10px;border-width:5px 7px 5px 0;border-color:transparent #0f6cbd transparent transparent}
.statuslabel{font-size:13px;color:#555;line-height:16px;margin-top:15px;border-top:1px solid #ccc}
.back__rstatus{margin:9px 0 0 0;height:25px;background:#f8f8f8;padding-right:4px;line-height:23px;font-weight:700;font-size:13px;color:#555}

/* middle window */
.mid__body{display:flex;height:765px;padding-left:4px}
.vscroll--mid{width:16px}
.vscroll__thumb--mid{height:661px}
.form{flex:1;padding:0 33px 0 5px;min-width:0;white-space:nowrap}
.form__crumb{font-size:13px;line-height:14px;margin:27px -4px 0 0;color:#444}
.form__title{font-size:39px;font-weight:300;line-height:40px;margin:0 -8px 0 0;color:#3a4656;display:flex;align-items:center;gap:12px}
.form__menu{margin-top:8px}
.sect--form{margin:17px -8px 0 0;padding-right:13px}
.sect--form:before{right:1px}
.form__rows{margin-top:27px}
.row{display:grid;grid-template-columns:104px 14px 14px 1fr;height:24px;align-items:center;font-size:13px;color:#555}
.row label{text-align:right;white-space:nowrap;padding-bottom:1px}
.row .req{margin-top:-4px;justify-self:center}
.lock{width:10px;height:13px;justify-self:center;margin-top:-3px}
.row__val{padding-right:6px;color:#333;line-height:23px}
.row__link{font-weight:700;color:#1c4e9d}
.row__bold{font-weight:700;color:#222}
.check{display:inline-block;width:11px;height:11px;border:1px solid #888;border-radius:2px;background:#e8e8e8;vertical-align:middle;margin-right:1px}
.check--off{border-color:#ccc;background:#f0f0f0}
.form__h4{font-size:12px;font-weight:700;line-height:16px;margin-top:65px;color:#111}
.grid__head{display:grid;grid-template-columns:119px 102px 102px 102px 202px 302px 1fr;margin-top:39px;border-top:1px solid #ccc;border-bottom:1px solid #ccc;height:25px;box-sizing:border-box;align-items:center;font-size:13px;color:#555}
.grid__head span{padding-right:16px;border-left:1px solid #ddd;line-height:15px;white-space:nowrap;overflow:hidden}
.grid__head span:first-child{padding-right:33px}
.grid__msg{font-size:13px;line-height:16px;margin-top:9px;padding-right:2px;color:#888}
.mid__status{margin:0 20px 0 4px;height:25px;border-top:1px solid #ccc;background:#f8f8f8;box-sizing:border-box;display:flex;justify-content:space-between;align-items:center;padding:0 5px 0 6px}
.mid__status b{color:#555;font-size:13px}

/* open dialog */
.dlg__txt{padding-bottom:2px}
.dlg__title{height:30px;display:flex;align-items:center;padding:0 9px;gap:6px;font-size:11.600px;color:#111}
.dlg__close{margin-left:auto}
.dlg__addr{height:30px;margin-top:5px;display:flex;align-items:center;padding:0 12px}
.dlg__addr svg{flex:none}
.dlg__addr>svg+svg{margin-left:17px}
.dlg__addr>svg:nth-child(3){margin-left:13px}
.dlg__addr>svg:nth-child(4){margin-left:11px}
.dlg__path{margin-left:6px;width:291px;flex:none;height:30px;box-sizing:border-box;border:1px solid #d9d9d9;display:flex;align-items:center;padding-left:2px;gap:7px;color:#222}
.dlg__path svg.chev{margin:0 1px}
.dlg__crumb+.chev{margin-left:4px !important}
.dlg__pathdown{margin-left:auto;margin-right:3px}
.dlg__refresh{width:32px;height:28px;border-left:1px solid #d9d9d9;display:flex;align-items:center;justify-content:center;flex:none}
.dlg__search{margin-left:13px;width:202px;flex:none;height:30px;box-sizing:border-box;border:1px solid #d9d9d9;display:flex;align-items:center;padding-left:14px;gap:14px;color:#666}
.dlg__tools{margin-top:7px;height:30px;background:#f5f6f7;border-bottom:1px solid #e8e8e8;display:flex;align-items:center;padding-left:18px;color:#333;box-sizing:border-box}
.caret{width:0;height:0;border:4px solid transparent;border-bottom:0;border-top:4px solid #333;margin-left:6px}
.dlg__newf{margin-left:31px}
.dlg__views{margin-left:auto;display:flex;align-items:center;padding-right:15px}
.dlg__views .caret{margin-left:11px}
.dlg__pane{margin-left:22px}
.dlg__help{margin-left:20px}
.dlg__main{flex:1;display:flex;min-height:0}
.tree{width:158px;border-right:1px solid #f0f0f0;padding-top:16px;flex:none}
.tree__i{display:flex;align-items:center;gap:5px;height:24px;padding:0 0 2px 33px;color:#222;width:156px;box-sizing:border-box}
.tree__i>svg:first-child{width:16px;flex:none}
.tree__i--root{padding-left:24px}
.tree__i--sel{background:#d9d9d9}
.tree__i--gap{margin-top:8px}
.tree__pin{margin-left:auto;margin-right:2px;flex:none}
.files{flex:1;display:flex;align-items:flex-start;padding:6px 0 0 15px}
.tile{width:74px;margin-right:1px;box-sizing:border-box;text-align:center;display:flex;flex-direction:column;align-items:center;padding:3px 1px 0;border:1px solid transparent;line-height:15px;color:#222;font-size:12px}
.tile__ico{width:48px;height:46px;flex:none;margin-bottom:1px}
.tile--sel{background:#cce8ff;border-color:#99d1ff;height:98px}
.dlg__foot{height:76px;background:#f0f0f0;box-sizing:border-box;padding-top:9px;position:relative;flex:none}
.dlg__line{display:flex;align-items:center;justify-content:flex-end;padding-right:17px;color:#111}
.dlg__line label{margin-right:5px}
.fname{width:218px;height:24px;box-sizing:border-box;border:1px solid #7a7a7a;background:#fff;display:flex;align-items:center;justify-content:space-between;padding:0 8px 0 3px;font-size:12px}
.ftype{width:188px;height:23px;margin-left:12px;box-sizing:border-box;border:1px solid #adadad;background:#e1e1e1;display:flex;align-items:center;justify-content:space-between;padding:0 3px}
.ftype svg{margin-right:2px}
.dlg__btns{display:flex;justify-content:flex-end;gap:14px;padding-right:18px;margin-top:6px}
.btn{width:86px;height:24px;box-sizing:border-box;border:1px solid #adadad;background:#e1e1e1;font:11.400px "Open Sans",sans-serif;color:#111;padding:0 0 2px}
.btn--main{border:2px solid #0078d7}
.dlg__grip{position:absolute;right:2px;bottom:2px}

/* taskbar */
.taskbar{position:absolute;left:0;top:984px;width:1280px;height:40px;background:#1f3540;display:flex;justify-content:space-between;color:#fff}
.taskbar__left{display:flex}
.tb{width:48px;height:40px;display:flex;align-items:center;justify-content:center;box-sizing:border-box}
.tb--edge{margin-left:3px;margin-right:1px}
.tb--on{background:#46585f;border-bottom:2px solid #76b9ed}
.tb--run{border-bottom:2px solid #76b9ed;width:40px;margin:0 4px 0 5px}
.taskbar__tray{display:flex;align-items:center;padding-right:25px}
.taskbar__tray svg+svg{margin-left:9px}
.taskbar__tray svg:nth-child(3){margin-left:6px}
.tray__lang{font-size:12px;margin-left:12px;color:#eee}
.tray__clock{display:flex;flex-direction:column;align-items:center;font-size:11.400px;line-height:16px;margin-left:14px;color:#eee;width:58px}
.taskbar__tray .tray__note{margin-left:19px}
```
